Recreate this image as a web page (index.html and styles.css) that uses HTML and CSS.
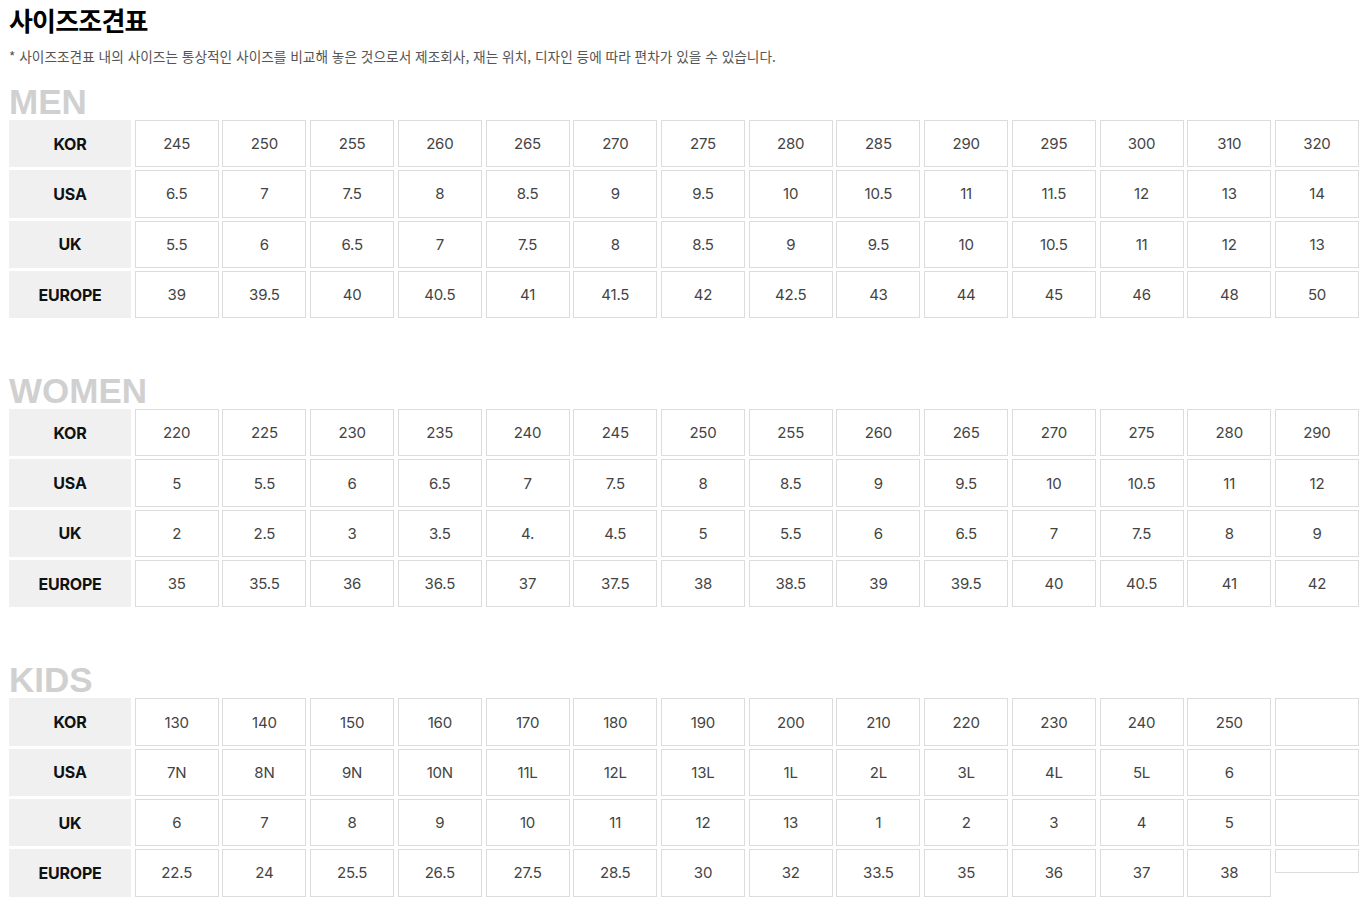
FILE: index.html
```html
<!DOCTYPE html>
<html lang="ko">
<head>
<meta charset="utf-8">
<title>사이즈조견표</title>
<link rel="stylesheet" href="styles.css">
</head>
<body>
<div class="page">
  <h1 class="title">사이즈조견표</h1>
  <p class="note">* 사이즈조견표 내의 사이즈는 통상적인 사이즈를 비교해 놓은 것으로서 제조회사, 재는 위치, 디자인 등에 따라 편차가 있을 수 있습니다.</p>

  <section class="section">
    <h2 class="sec-title">MEN</h2>
    <div class="grid">
      <div class="hd">KOR</div>
      <div class="cell">245</div><div class="cell">250</div><div class="cell">255</div><div class="cell">260</div><div class="cell">265</div><div class="cell">270</div><div class="cell">275</div><div class="cell">280</div><div class="cell">285</div><div class="cell">290</div><div class="cell">295</div><div class="cell">300</div><div class="cell">310</div><div class="cell">320</div>
      <div class="hd">USA</div>
      <div class="cell">6.5</div><div class="cell">7</div><div class="cell">7.5</div><div class="cell">8</div><div class="cell">8.5</div><div class="cell">9</div><div class="cell">9.5</div><div class="cell">10</div><div class="cell">10.5</div><div class="cell">11</div><div class="cell">11.5</div><div class="cell">12</div><div class="cell">13</div><div class="cell">14</div>
      <div class="hd">UK</div>
      <div class="cell">5.5</div><div class="cell">6</div><div class="cell">6.5</div><div class="cell">7</div><div class="cell">7.5</div><div class="cell">8</div><div class="cell">8.5</div><div class="cell">9</div><div class="cell">9.5</div><div class="cell">10</div><div class="cell">10.5</div><div class="cell">11</div><div class="cell">12</div><div class="cell">13</div>
      <div class="hd">EUROPE</div>
      <div class="cell">39</div><div class="cell">39.5</div><div class="cell">40</div><div class="cell">40.5</div><div class="cell">41</div><div class="cell">41.5</div><div class="cell">42</div><div class="cell">42.5</div><div class="cell">43</div><div class="cell">44</div><div class="cell">45</div><div class="cell">46</div><div class="cell">48</div><div class="cell">50</div>
    </div>
  </section>

  <section class="section">
    <h2 class="sec-title">WOMEN</h2>
    <div class="grid">
      <div class="hd">KOR</div>
      <div class="cell">220</div><div class="cell">225</div><div class="cell">230</div><div class="cell">235</div><div class="cell">240</div><div class="cell">245</div><div class="cell">250</div><div class="cell">255</div><div class="cell">260</div><div class="cell">265</div><div class="cell">270</div><div class="cell">275</div><div class="cell">280</div><div class="cell">290</div>
      <div class="hd">USA</div>
      <div class="cell">5</div><div class="cell">5.5</div><div class="cell">6</div><div class="cell">6.5</div><div class="cell">7</div><div class="cell">7.5</div><div class="cell">8</div><div class="cell">8.5</div><div class="cell">9</div><div class="cell">9.5</div><div class="cell">10</div><div class="cell">10.5</div><div class="cell">11</div><div class="cell">12</div>
      <div class="hd">UK</div>
      <div class="cell">2</div><div class="cell">2.5</div><div class="cell">3</div><div class="cell">3.5</div><div class="cell">4.</div><div class="cell">4.5</div><div class="cell">5</div><div class="cell">5.5</div><div class="cell">6</div><div class="cell">6.5</div><div class="cell">7</div><div class="cell">7.5</div><div class="cell">8</div><div class="cell">9</div>
      <div class="hd">EUROPE</div>
      <div class="cell">35</div><div class="cell">35.5</div><div class="cell">36</div><div class="cell">36.5</div><div class="cell">37</div><div class="cell">37.5</div><div class="cell">38</div><div class="cell">38.5</div><div class="cell">39</div><div class="cell">39.5</div><div class="cell">40</div><div class="cell">40.5</div><div class="cell">41</div><div class="cell">42</div>
    </div>
  </section>

  <section class="section">
    <h2 class="sec-title">KIDS</h2>
    <div class="grid">
      <div class="hd">KOR</div>
      <div class="cell">130</div><div class="cell">140</div><div class="cell">150</div><div class="cell">160</div><div class="cell">170</div><div class="cell">180</div><div class="cell">190</div><div class="cell">200</div><div class="cell">210</div><div class="cell">220</div><div class="cell">230</div><div class="cell">240</div><div class="cell">250</div><div class="cell"></div>
      <div class="hd">USA</div>
      <div class="cell">7N</div><div class="cell">8N</div><div class="cell">9N</div><div class="cell">10N</div><div class="cell">11L</div><div class="cell">12L</div><div class="cell">13L</div><div class="cell">1L</div><div class="cell">2L</div><div class="cell">3L</div><div class="cell">4L</div><div class="cell">5L</div><div class="cell">6</div><div class="cell"></div>
      <div class="hd">UK</div>
      <div class="cell">6</div><div class="cell">7</div><div class="cell">8</div><div class="cell">9</div><div class="cell">10</div><div class="cell">11</div><div class="cell">12</div><div class="cell">13</div><div class="cell">1</div><div class="cell">2</div><div class="cell">3</div><div class="cell">4</div><div class="cell">5</div><div class="cell"></div>
      <div class="hd">EUROPE</div>
      <div class="cell">22.5</div><div class="cell">24</div><div class="cell">25.5</div><div class="cell">26.5</div><div class="cell">27.5</div><div class="cell">28.5</div><div class="cell">30</div><div class="cell">32</div><div class="cell">33.5</div><div class="cell">35</div><div class="cell">36</div><div class="cell">37</div><div class="cell">38</div><div class="cell cell-short"></div>
    </div>
  </section>
</div>
</body>
</html>
```

FILE: styles.css
```css
html, body {
  margin: 0;
  padding: 0;
  background: #fff;
}

.page {
  padding: 0 12px 0 9px;
  font-family: Inter, "Noto Sans CJK KR", sans-serif;
  color: #444;
}

.title {
  margin: 0;
  padding-top: 3px;
  font-family: "Noto Sans CJK KR", sans-serif;
  font-size: 26px;
  line-height: 34px;
  font-weight: 700;
  letter-spacing: -0.8px;
  color: #000;
}

.note {
  margin: 10px 0 0;
  font-family: "Noto Sans CJK KR", sans-serif;
  font-size: 13.7px;
  line-height: 18px;
  color: #555;
  letter-spacing: 0;
}

.section {
  margin-top: 19px;
}

.section + .section {
  margin-top: 55px;
}

.sec-title {
  margin: 0;
  font-family: "Liberation Sans", Arial, sans-serif;
  font-size: 35px;
  line-height: 36px;
  font-weight: 700;
  color: #d0d0d0;
}

.grid {
  display: grid;
  grid-template-columns: 122px repeat(14, 1fr);
  grid-auto-rows: 47.3px;
  column-gap: 3.7px;
  row-gap: 3px;
  width: 1350px;
}

.hd {
  display: flex;
  align-items: center;
  justify-content: center;
  background: #f0f0f0;
  font-weight: 700;
  font-size: 16px;
  color: #111;
  letter-spacing: -0.2px;
}

.cell {
  display: flex;
  align-items: center;
  justify-content: center;
  border: 1px solid #dcdcdc;
  box-sizing: border-box;
  font-size: 15px;
  color: #444;
  letter-spacing: -0.2px;
}

.cell-short {
  align-self: start;
  height: 24px;
}
```
